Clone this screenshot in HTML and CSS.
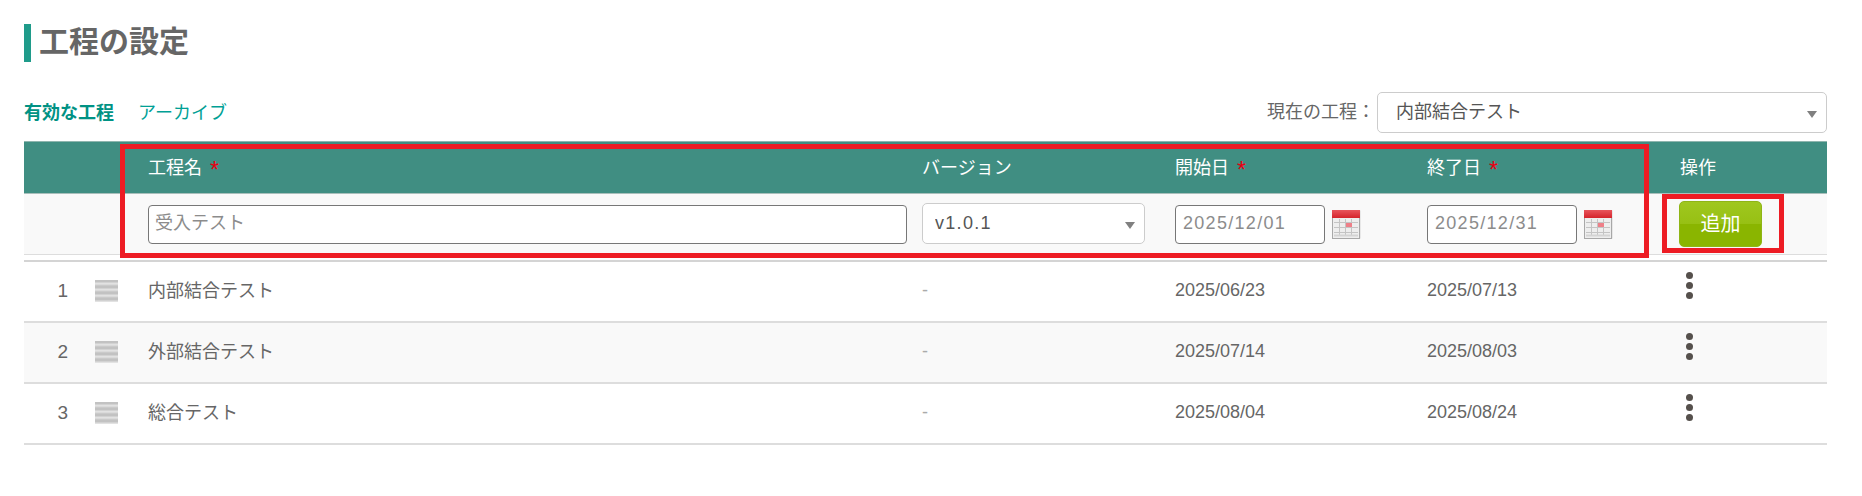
FILE: index.html
```html
<!DOCTYPE html>
<html lang="ja">

<head>
    <meta charset="UTF-8">
    <meta name="viewport" content="width=device-width, initial-scale=1.0">
    <title>工程の設定</title>
    <link rel="stylesheet" href="styles.css">
</head>

<body>
    <svg class="defs" width="0" height="0">
        <defs>
            <linearGradient id="calTop" x1="0" y1="0" x2="0" y2="1">
                <stop offset="0" stop-color="#e8555c" />
                <stop offset="1" stop-color="#d5242c" />
            </linearGradient>
            <g id="calendar">
                <rect x="1.5" y="0.5" width="27" height="28" fill="#d8d8d8" />
                <rect x="0.5" y="0.5" width="27" height="28" fill="#eeeeee" stroke="#a8a8a8" />
                <rect x="0" y="0" width="28" height="8" fill="url(#calTop)" />
                <path d="M2 12.5H26M2 17.5H26M2 22.5H26M7.5 9V26M13.5 9V26M19.5 9V26" stroke="#c4c4c4" fill="none" />
                <rect x="2" y="24.5" width="24" height="2" fill="#d4d4d4" />
                <rect x="14" y="13" width="6" height="4" fill="#ee7f88" />
            </g>
        </defs>
    </svg>

    <div class="page">
        <h1 class="page-title">工程の設定</h1>

        <div class="toolbar">
            <div class="tabs">
                <span class="tab active">有効な工程</span>
                <span class="tab">アーカイブ</span>
            </div>
            <div class="current">
                <span class="current-label">現在の工程：</span>
                <div class="select-box current-select">
                    <select>
                        <option>内部結合テスト</option>
                    </select>
                </div>
            </div>
        </div>

        <div class="grid-wrap">
            <div class="row head">
                <div></div>
                <div>工程名 <span class="req">*</span></div>
                <div>バージョン</div>
                <div>開始日 <span class="req">*</span></div>
                <div>終了日 <span class="req">*</span></div>
                <div>操作</div>
            </div>

            <div class="row add-row">
                <div></div>
                <div><input class="text-input name-input" type="text" placeholder="受入テスト"></div>
                <div>
                    <div class="select-box version-select">
                        <select>
                            <option>v1.0.1</option>
                        </select>
                    </div>
                </div>
                <div class="date-cell">
                    <input class="text-input date-input" type="text" placeholder="2025/12/01">
                    <svg class="cal-icon" width="29" height="29"><use href="#calendar" /></svg>
                </div>
                <div class="date-cell">
                    <input class="text-input date-input" type="text" placeholder="2025/12/31">
                    <svg class="cal-icon" width="29" height="29"><use href="#calendar" /></svg>
                </div>
                <div><button class="add-button">追加</button></div>
            </div>

            <div class="rows">
                <div class="row item">
                    <div class="lead"><span class="num">1</span><span class="handle"></span></div>
                    <div class="cjk">内部結合テスト</div>
                    <div class="dash">-</div>
                    <div>2025/06/23</div>
                    <div>2025/07/13</div>
                    <div class="kebab"><i></i><i></i><i></i></div>
                </div>
                <div class="row item odd">
                    <div class="lead"><span class="num">2</span><span class="handle"></span></div>
                    <div class="cjk">外部結合テスト</div>
                    <div class="dash">-</div>
                    <div>2025/07/14</div>
                    <div>2025/08/03</div>
                    <div class="kebab"><i></i><i></i><i></i></div>
                </div>
                <div class="row item">
                    <div class="lead"><span class="num">3</span><span class="handle"></span></div>
                    <div class="cjk">総合テスト</div>
                    <div class="dash">-</div>
                    <div>2025/08/04</div>
                    <div>2025/08/24</div>
                    <div class="kebab"><i></i><i></i><i></i></div>
                </div>
            </div>

            <!-- annotation frames from the manual -->
            <div class="mark mark-fields"></div>
            <div class="mark mark-button"></div>
        </div>
    </div>
</body>

</html>
```

FILE: styles.css
```css
body {
    font-family: 'Liberation Sans', 'Noto Sans CJK JP', sans-serif;
    font-size: 18px;
    color: #666;
    background-color: #fff;
    margin: 0;
    padding: 0;
}

.defs {
    display: block;
    height: 0;
}

.page {
    padding: 24px 35px 0 24px;
}

.page-title {
    margin: 0;
    height: 38px;
    line-height: 36px;
    padding-left: 8px;
    border-left: 7px solid #1f9b8a;
    font-size: 30px;
    font-weight: 700;
    color: #666;
}

.toolbar {
    display: flex;
    justify-content: space-between;
    align-items: center;
    height: 41px;
    margin-top: 30px;
    margin-bottom: 8px;
}

.tabs {
    display: flex;
    gap: 24px;
    padding-bottom: 4px;
}

.tab {
    color: #00a095;
}

.tab.active {
    color: #009284;
    font-weight: 700;
}

.current {
    display: flex;
    align-items: center;
}

.current-label {
    width: 110px;
    padding-bottom: 5px;
}

.select-box {
    position: relative;
    height: 41px;
    box-sizing: border-box;
    background: #fff;
    border: 1px solid #ccc;
    border-radius: 5px;
}

.select-box::after {
    content: "";
    position: absolute;
    right: 9px;
    top: 18px;
    border-left: 5px solid transparent;
    border-right: 5px solid transparent;
    border-top: 7px solid #808080;
}

.select-box select {
    appearance: none;
    width: 100%;
    height: 100%;
    border: none;
    background: transparent;
    outline: none;
    font: inherit;
    color: #555;
    padding: 0 30px 2px 12px;
}

.current-select {
    width: 450px;
}

.current-select select {
    padding-left: 18px;
}

.version-select {
    width: 223px;
    margin-top: -1px;
}

.version-select select {
    letter-spacing: 1.3px;
}

.grid-wrap {
    position: relative;
}

.row {
    display: grid;
    grid-template-columns: 124px 774px 253px 252px 253px 147px;
    align-items: center;
}

.head {
    height: 53px;
    box-sizing: border-box;
    padding-bottom: 3px;
    background-color: #408e82;
    border-top: 1px solid #8fb5ae;
    border-bottom: 1px solid #a9bfbb;
    color: #fff;
}

.req {
    color: #e60012;
    margin-left: 3px;
    font-size: 23px;
    line-height: 18px;
    vertical-align: -4px;
}

.add-row {
    height: 61px;
    box-sizing: border-box;
    background-color: #f9f9f9;
    border-bottom: 1px solid #ddd;
}

.text-input {
    display: block;
    box-sizing: border-box;
    height: 39px;
    background: #fff;
    border: 1px solid #777;
    border-radius: 4px;
    padding: 0 7px 2px 6px;
    font: inherit;
    outline: none;
}

.text-input::placeholder {
    color: #8c8c8c;
    opacity: 1;
}

.name-input {
    width: 759px;
}

.date-cell {
    display: flex;
    align-items: center;
    gap: 7px;
}

.date-input {
    width: 150px;
    padding-left: 7px;
    letter-spacing: 1.3px;
}

.cal-icon {
    display: block;
}

.add-button {
    display: block;
    width: 83px;
    height: 46px;
    margin-left: -1px;
    padding: 0 0 4px;
    border: 1px solid #8fb516;
    border-radius: 5px;
    background: linear-gradient(#9fc71f 0, #97c014 50%, #8ab500 50%, #8ab500 100%);
    color: #fff;
    font: inherit;
    font-size: 20px;
}

.rows {
    margin-top: 5px;
    border-top: 2px solid #d4d4d4;
}

.item {
    height: 61px;
    box-sizing: border-box;
    padding-bottom: 2px;
    border-bottom: 2px solid #ddd;
}

.item.odd {
    background-color: #f9f9f9;
}

.cjk {
    padding-bottom: 3px;
}

.lead {
    display: flex;
    align-items: center;
}

.num {
    width: 71px;
    padding-right: 27px;
    box-sizing: border-box;
    text-align: right;
    font-size: 19px;
}

.handle {
    display: block;
    width: 23px;
    height: 22px;
    background: repeating-linear-gradient(#c2c2c2 0, #c2c2c2 2px, #e2e2e2 3px, #e2e2e2 4px, #c2c2c2 6px);
}

.dash {
    color: #aaa;
}

.kebab {
    align-self: start;
    display: flex;
    flex-direction: column;
    gap: 3px;
    padding: 10px 0 0 6px;
}

.kebab i {
    display: block;
    width: 7px;
    height: 7px;
    border-radius: 50%;
    background-color: #55504c;
}

.mark {
    position: absolute;
    box-sizing: border-box;
    border: 5px solid #ed1c24;
}

.mark-fields {
    left: 96px;
    top: 3px;
    width: 1529px;
    height: 114px;
}

.mark-button {
    left: 1638px;
    top: 53px;
    width: 122px;
    height: 59px;
}
```
